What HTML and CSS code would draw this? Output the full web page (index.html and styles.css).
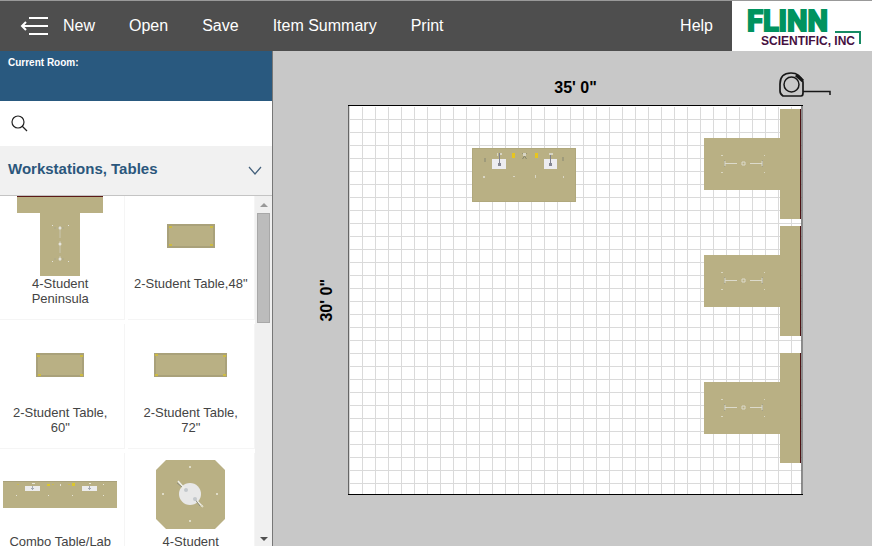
FILE: index.html
```html
<!DOCTYPE html>
<html lang="en">
<head>
<meta charset="utf-8">
<title>Lab Room Designer</title>
<link rel="stylesheet" href="styles.css">
</head>
<body>
<div class="app">
  <header class="topbar">
    <button class="collapse" type="button" aria-label="Toggle sidebar">
      <svg width="28" height="18" viewBox="0 0 28 18" fill="none" stroke="#fff" stroke-width="2"><path d="M9 1H28M2 9H28M9 17H28"/><path d="M6 5L2 9L6 13"/></svg>
    </button>
    <nav class="menu">
      <a href="#new">New</a>
      <a href="#open">Open</a>
      <a href="#save">Save</a>
      <a href="#summary">Item Summary</a>
      <a href="#print">Print</a>
      <a class="help" href="#help">Help</a>
    </nav>
    <a class="logo" href="#home" aria-label="Flinn Scientific, Inc">
      <svg width="140" height="50" viewBox="0 0 140 50">
        <text class="logo-name" x="15" y="30">FLINN</text>
        <text class="logo-sub" x="29" y="44">SCIENTIFIC, INC</text>
        <path d="M103 31H128V43" fill="none" stroke="#168a63" stroke-width="2"/>
      </svg>
    </a>
  </header>
  <div class="workspace">
    <aside class="sidebar">
      <div class="current-room">Current Room:</div>
      <div class="search">
        <label for="search" aria-label="Search items">
          <svg width="18" height="18" viewBox="0 0 18 18" fill="none" stroke="#222" stroke-width="1.200"><circle cx="7" cy="7" r="6"/><path d="M11 11L16 16"/></svg>
        </label>
        <input id="search" type="text">
      </div>
      <button class="category" type="button" aria-expanded="true">
        <span>Workstations, Tables</span>
        <svg width="14" height="9" viewBox="0 0 14 9" fill="none" stroke="#44617c" stroke-width="1.200"><path d="M1 1L7 8L13 1"/></svg>
      </button>
      <div class="catalog">
        <ul class="items">
          <li class="item">
            <div class="thumb">
              <svg width="86" height="80" viewBox="0 0 86 80"><path d="M0 0H86V17H63V80H23V17H0z" fill="#b9b084"/><path d="M0 .5H86" stroke="#5c1a18"/><path d="M43 30V65" stroke="#c9c5ad" stroke-dasharray="12 3"/><path d="M37 32h12M37 63h12" stroke="#a9a68a" stroke-dasharray="2 2"/><g fill="#e4e3db"><circle cx="43" cy="32" r="1.500"/><circle cx="43" cy="48" r="1.500"/><circle cx="43" cy="63" r="1.500"/><path d="M35 29h1v1h-1zM51 29h1v1h-1zM35 65h1v1h-1zM51 65h1v1h-1z"/></g></svg>
            </div>
            <span>4-Student Peninsula</span>
          </li>
          <li class="item">
            <div class="thumb">
              <svg width="48" height="24" viewBox="0 0 48 24"><path d="M0 0H48V24H0z" fill="#a9a17a"/><path d="M2 2H46V22H2z" fill="#b9b084"/><path d="M2 2h3v2H2zM43 2h3v2h-3zM2 20h3v2H2zM43 20h3v2h-3z" fill="#cdbb43"/></svg>
            </div>
            <span>2-Student Table,48"</span>
          </li>
          <li class="item">
            <div class="thumb">
              <svg width="48" height="24" viewBox="0 0 48 24"><path d="M0 0H48V24H0z" fill="#a9a17a"/><path d="M2 2H46V22H2z" fill="#b9b084"/><path d="M1 2h3v2H1zM44 2h3v2h-3zM2 21h3v2H2zM44 21h3v2h-3z" fill="#cdbb43"/></svg>
            </div>
            <span>2-Student Table, 60"</span>
          </li>
          <li class="item">
            <div class="thumb">
              <svg width="73" height="24" viewBox="0 0 73 24"><path d="M0 0H73V24H0z" fill="#a9a17a"/><path d="M2 2H71V22H2z" fill="#b9b084"/><path d="M1 1h3v2H1zM69 2h3v2h-3zM1 21h3v2H1zM69 21h3v2h-3z" fill="#cdbb43"/></svg>
            </div>
            <span>2-Student Table, 72"</span>
          </li>
          <li class="item">
            <div class="thumb">
              <svg width="114" height="27" viewBox="0 0 114 27"><path d="M0 0H114V27H0z" fill="#b9b084"/><path d="M0 .5H114" stroke="#a9a17a"/><path d="M22 5h15v5H22zM79 5h15v5H79z" fill="#ececec"/><path d="M29.500 5V9M86.500 5V9M28 7.500h3M85 7.500h3" stroke="#a4a9b3"/><path d="M44 3h3v2h-3zM69 2h3v3h-3z" fill="#dcc72c"/><path d="M14 3h2v1h-2zM49 3h2v1h-2zM65 3h2v1h-2z" fill="#c9ba55"/><path d="M29 2h3v1h-3zM57 3h1v2h-1zM86 2h2v1h-2zM100 3h1v1h-1zM13 14h1v1h-1zM45 14h1v1h-1zM69 14h1v1h-1zM100 14h1v1h-1z" fill="#e6e4d6"/></svg>
            </div>
            <span>Combo Table/Lab</span>
          </li>
          <li class="item">
            <div class="thumb">
              <svg width="69" height="69" viewBox="0 0 69 69"><path d="M10 0H59L69 10V59L59 69H10L0 59V10z" fill="#b9b084"/><circle cx="34" cy="34" r="11" fill="#e8e8e8"/><path d="M22 21L29 29M40 40L47 47" stroke="#efefe9" stroke-width="1.500"/><path d="M21 23L26 27M38 38L44 46" stroke="#8f8f80"/><g fill="#c3c8cc"><circle cx="30" cy="30" r="2"/><circle cx="39" cy="39" r="2"/></g><path d="M33 6h2v2h-2zM33 60h2v2h-2zM6 33h2v2H6zM60 33h2v2h-2zM45 45h2v2h-2z" fill="#dedbc5"/></svg>
            </div>
            <span>4-Student</span>
          </li>
        </ul>
        <div class="scrollbar" aria-hidden="true">
          <svg width="8" height="5" viewBox="0 0 8 5"><path d="M0 4L4 0L8 4z" fill="#999"/></svg>
          <div class="scroll-track"><div class="scroll-thumb"></div></div>
          <svg width="8" height="5" viewBox="0 0 8 5"><path d="M0 0L4 4L8 0z" fill="#505050"/></svg>
        </div>
      </div>
    </aside>
    <main class="canvas">
      <div class="room-width">35' 0"</div>
      <div class="room-depth"><span>30' 0"</span></div>
      <svg class="room" viewBox="0 0 455 390" role="img" aria-label="Room floor plan">
        <defs>
          <pattern id="cells" x="1" y="1" width="13" height="13" patternUnits="userSpaceOnUse">
            <path d="M0 .5H13M.5 0V13" fill="none" stroke="#dadada"/>
          </pattern>
          <g id="peninsula">
            <path d="M0 29H76V0H97V110H76V81H0z" fill="#b9b084"/>
            <path d="M96.500 0V110" stroke="#4d1214"/>
            <path d="M20 54.500H33M46 54.500H58" stroke="#dcdacb"/>
            <path d="M20.500 51V58M58.500 51V58" stroke="#a3a18a"/>
            <path d="M21 52V57M58 52V57M38 53h3v3h-3z" stroke="#dcdacb" fill="none"/>
            <path d="M17 46h2v1h-2zM17 63h2v1h-2zM60 46h1v1h-1zM60 63h1v1h-1z" fill="#d9d6c0"/>
          </g>
        </defs>
        <path d="M0 0H455V390H0z" fill="#fff"/>
        <path d="M2 2H454V389H2z" fill="url(#cells)"/>
        <g transform="translate(124 43)">
          <path d="M0 0H104V54H0z" fill="#b9b084"/>
          <path d="M.5 .5H103.500V53.500H.5z" fill="none" stroke="#b0a87c"/>
          <path d="M20 11H34V21H20zM72 11H85V21H72z" fill="#ededf0"/>
          <path d="M27.500 5V18M78.500 5V18" stroke="#81828c"/>
          <path d="M26 15h3v3h-3zM77 15h3v3h-3z" fill="#858793"/>
          <path d="M40 5h3v5h-3zM63 5h3v5h-3z" fill="#e7c51f"/>
          <path d="M50.500 5L54.500 11M54.500 5L50.500 11" stroke="#85856e"/>
          <path d="M25 5h1v3h-1zM28 5h2v2h-2zM77 5h4v2h-4zM51 5h3v3h-3zM11 28h2v2h-2zM41 28h2v1h-2zM63 27h1v3h-1zM91 28h1v2h-1z" fill="#d8d5c4"/>
          <path d="M12 10h2v4h-2zM90 9h2v4h-2z" fill="#9f9b7b"/>
        </g>
        <use href="#peninsula" x="356" y="4"/>
        <use href="#peninsula" x="356" y="121"/>
        <use href="#peninsula" x="356" y="248"/>
        <path d="M.5 0V390M454 0V390" fill="none" stroke="#666" stroke-width="1.500"/>
        <path d="M0 .5H455M0 389.500H455" fill="none" stroke="#000"/>
      </svg>
      <button class="measure" type="button" aria-label="Tape measure">
        <svg width="54" height="27" viewBox="0 0 54 27" fill="none" stroke="#171717"><path d="M5 24H23Q25 24 25 21V10Q22 1 13 1Q2 1 2 12V19Q2 22 5 24z" stroke-width="1.700"/><circle cx="13.500" cy="12.500" r="7.500" stroke-width="1.500"/><path d="M18 3L25 9" stroke-width="3"/><path d="M25 19.500H52V23" stroke-width="1.500"/></svg>
      </button>
    </main>
  </div>
</div>
</body>
</html>
```
FILE: styles.css
```css
* { box-sizing: border-box; }
body { margin: 0; font-family: "Liberation Sans", Arial, sans-serif; }
button { border: 0; padding: 0; background: none; font: inherit; }
a { color: inherit; text-decoration: none; }
svg { display: block; flex: none; }

.app { display: flex; flex-direction: column; height: 100vh; overflow: hidden; }

.topbar {
  display: flex;
  flex: none;
  height: 51px;
  border-top: 1px solid #999;
  background: #4e4e4e;
  color: #fff;
}
.collapse { padding-left: 20px; }
.menu {
  display: flex;
  flex: 1;
  align-items: center;
  gap: 34px;
  padding: 0 19px 0 15px;
  font-size: 16px;
  white-space: nowrap;
}
.help { margin-left: auto; }
.logo { background: #fff; }
.logo-name {
  fill: #00935f;
  stroke: #00935f;
  stroke-width: 2px;
  font: bold 29px Roboto, "Liberation Sans", sans-serif;
}
.logo-sub { fill: #45103f; font: bold 12px "Liberation Sans", sans-serif; }

.workspace { display: flex; flex: 1; min-height: 0; }
.sidebar {
  display: flex;
  flex: none;
  flex-direction: column;
  width: 273px;
  border-right: 1px solid #777;
  background: #fff;
}
.current-room {
  flex: none;
  height: 50px;
  padding: 6px 8px;
  background: #29597f;
  color: #fff;
  font-size: 10px;
  font-weight: bold;
  line-height: 12px;
}
.search { display: flex; flex: none; align-items: center; gap: 8px; height: 45px; padding: 0 11px; }
.search input { flex: 1; min-width: 0; border: 0; outline: 0; font: inherit; }
.category {
  display: flex;
  flex: none;
  align-items: center;
  justify-content: space-between;
  height: 50px;
  padding: 0 10px 4px 8px;
  border-bottom: 1px solid #c4c4c4;
  background: #f1f1f1;
  color: #2b577c;
  font-size: 15px;
  font-weight: bold;
}
.category svg { margin-top: 4px; }

.catalog { display: flex; flex: 1; min-height: 0; overflow: hidden; }
.items {
  display: grid;
  flex: 1;
  grid-template-columns: 1fr 1fr;
  grid-auto-rows: 125px;
  align-content: start;
  gap: 4px 3px;
  margin: -1px 0 0 -3px;
  padding: 0;
  list-style: none;
}
.item {
  padding: 1px 5px 0;
  border: solid #f5f5f5;
  border-width: 0 1px 1px 0;
  color: #444;
  font-size: 13px;
  line-height: 15px;
  text-align: center;
}
.thumb { display: flex; align-items: center; justify-content: center; height: 80px; }
.scrollbar {
  display: flex;
  flex: none;
  flex-direction: column;
  align-items: center;
  width: 17px;
  padding: 7px 2px 4px;
  background: #f0f0f0;
}
.scroll-track { flex: 1; width: 100%; padding: 5px 0; }
.scroll-thumb { height: 110px; border: 1px solid #a8a8a8; background: #bcbcbc; }

.canvas {
  position: relative;
  display: grid;
  flex: 1;
  grid-template-columns: 75px 1fr 69px;
  grid-template-rows: 54px auto;
  align-content: start;
  min-width: 0;
  background: #c8c8c8;
  font-size: 16px;
  font-weight: bold;
}
.room-width { grid-column: 2; padding-top: 28px; line-height: 18px; text-align: center; }
.room-depth {
  display: flex;
  grid-row: 2;
  align-items: center;
  justify-content: flex-end;
  padding-right: 12px;
}
.room-depth span { line-height: 18px; writing-mode: vertical-rl; transform: rotate(180deg); }
.room { grid-row: 2; grid-column: 2; width: 100%; height: auto; }
.measure { position: absolute; top: 21px; right: 40px; }
```
